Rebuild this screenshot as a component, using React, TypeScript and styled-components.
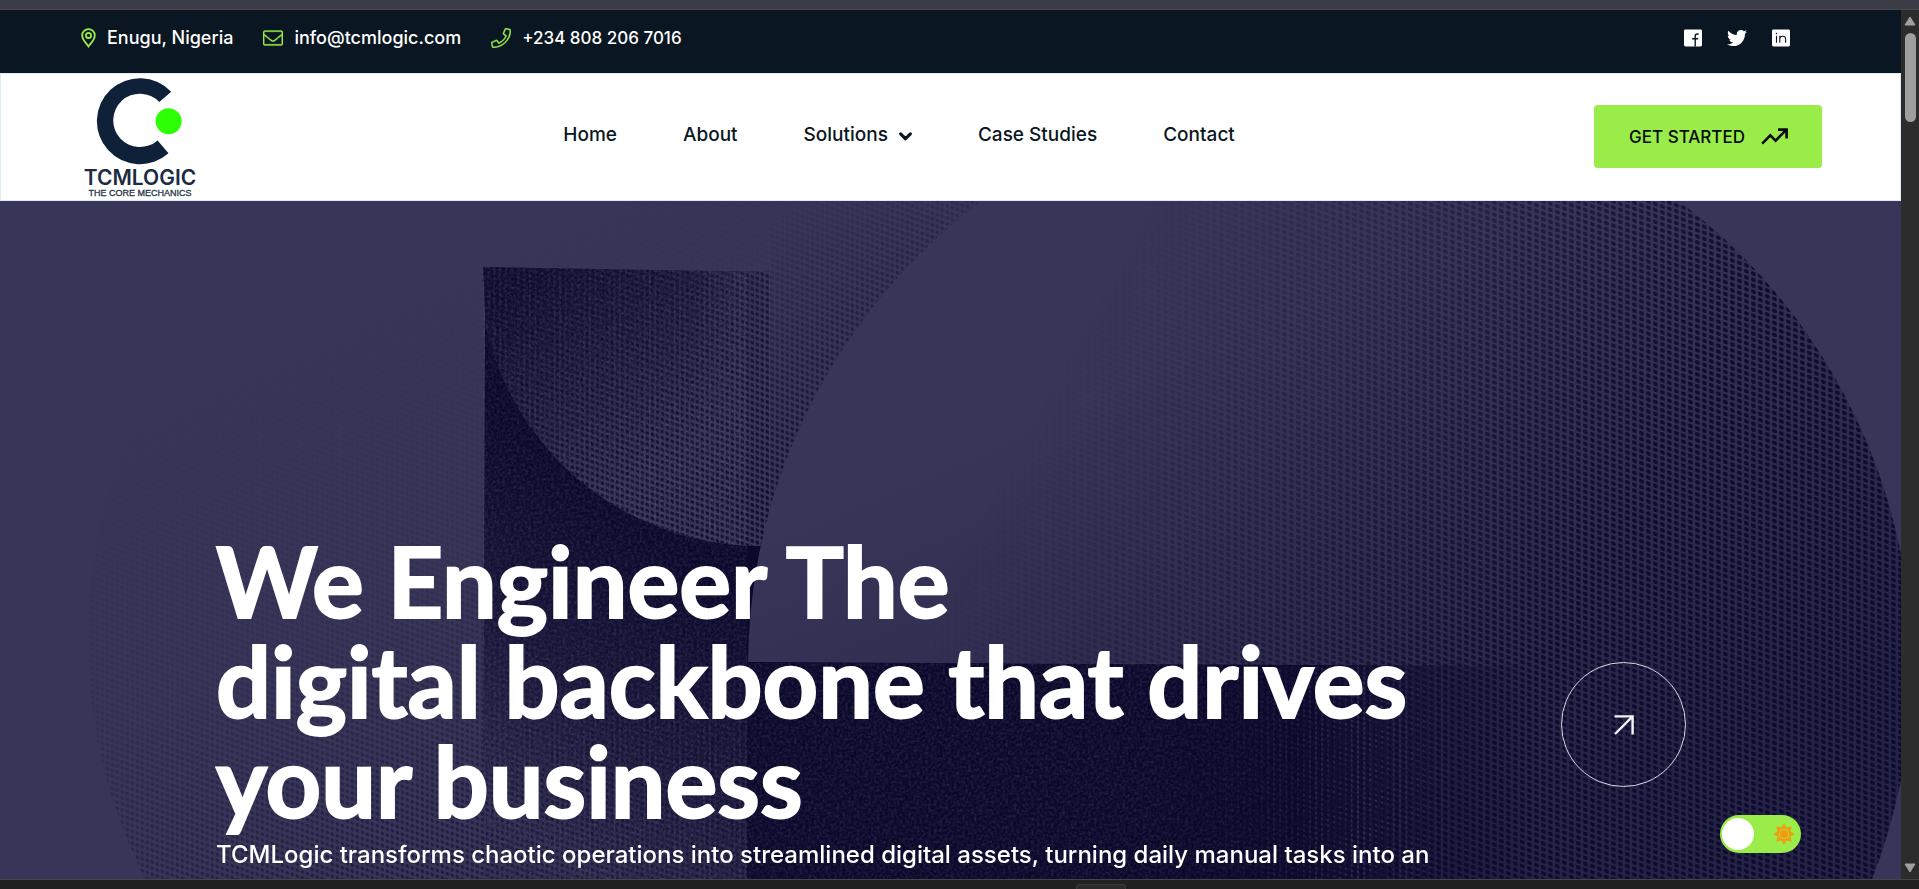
import React from "react";
import styled, { createGlobalStyle } from "styled-components";
import { FaChevronDown, FaTwitter } from "react-icons/fa6";

const GlobalStyle = createGlobalStyle`
  *, *::before, *::after { box-sizing: border-box; }
  html, body { margin: 0; padding: 0; }
  body {
    background: #202020;
    color: #0a1621;
    font-family: Inter, "Liberation Sans", sans-serif;
  }
  h1, p, ul { margin: 0; padding: 0; }
  ul { list-style: none; }
  a { color: inherit; text-decoration: none; }
  svg { display: block; }
`;

const night = "#0a1621";
const lime = "#9aec49";
const base = "#383658";
const ink = "#0b092b";

/* ---------- window frame ---------- */

const Frame = styled.div`
  display: flex;
  flex-direction: column;
  height: 100vh;
  min-height: 480px;
  overflow: hidden;
`;

const TopEdge = styled.div`
  flex: none;
  height: 10px;
  background: #3b3c46;
  border-bottom: 1px solid #46494d;
`;

const BottomEdge = styled.div`
  flex: none;
  display: flex;
  justify-content: center;
  align-items: flex-end;
  height: 10px;
  padding-left: 282px;
  background: #202020;
  border-top: 1px solid #454545;
`;

const BottomTab = styled.div`
  width: 50px;
  height: 5px;
  border: 1px solid #3c3c3c;
  border-bottom: 0;
  border-radius: 4px 4px 0 0;
  background: #2b2b2b;
`;

const Viewport = styled.div`
  flex: 1;
  display: flex;
  min-height: 0;
`;

const Page = styled.div`
  position: relative;
  flex: 1;
  display: flex;
  flex-direction: column;
  min-width: 0;
  overflow: hidden;
`;

const Scrollbar = styled.div`
  flex: none;
  display: flex;
  flex-direction: column;
  align-items: center;
  width: 18px;
  padding: 6px 0;
  background: #2c2c2c;
`;

const Thumb = styled.div`
  width: 11px;
  height: 89px;
  margin: 7px 0 auto;
  border-radius: 6px;
  background: #9f9f9f;
`;

/* ---------- contact bar ---------- */

const ContactBar = styled.div`
  flex: none;
  display: flex;
  justify-content: space-between;
  align-items: center;
  height: 63px;
  padding: 0 111px 7px 81px;
  background: ${night};
  color: #fff;
`;

const ContactList = styled.ul`
  display: flex;
  gap: 30px;
`;

const ContactLink = styled.a<{ $size?: number }>`
  display: flex;
  align-items: center;
  gap: 11px;
  font-size: ${(p) => p.$size ?? 18}px;
  font-weight: 500;
  line-height: 28px;
  white-space: nowrap;

  svg { color: ${lime}; }
`;

const SocialList = styled.ul`
  display: flex;
  align-items: center;
  gap: 25px;
`;

/* ---------- header ---------- */

const Header = styled.header`
  flex: none;
  display: flex;
  justify-content: space-between;
  align-items: center;
  height: 128px;
  padding: 0 78px 1px 79px;
  border: 1px solid #dcebf8;
  background: #fff;
`;

const LogoLink = styled.a`
  width: 124px;
`;

const Nav = styled.nav`
  display: flex;
  align-items: center;
  gap: 66px;
  padding-bottom: 3px;
`;

const navText = `
  font-family: inherit;
  font-size: 19px;
  font-weight: 500;
  line-height: 28px;
  color: ${night};
  white-space: nowrap;
`;

const NavLink = styled.a`${navText}`;

const NavButton = styled.button`
  ${navText}
  display: flex;
  align-items: center;
  gap: 11px;
  padding: 0;
  border: 0;
  background: none;

  svg { stroke: currentColor; stroke-width: 60px; overflow: visible; }
`;

const StartButton = styled.button`
  display: flex;
  align-items: center;
  gap: 16px;
  height: 63px;
  padding: 0 34px 0 35px;
  border: 0;
  border-radius: 4px;
  background: ${lime};
  color: #050a0f;
  font-family: inherit;
  font-size: 17px;
  font-weight: 500;
  white-space: nowrap;
`;

/* ---------- hero ---------- */

const Hero = styled.main`
  position: relative;
  flex: 1 0 auto;
  display: flex;
  justify-content: space-between;
  align-items: flex-start;
  padding: 330px 215px 6px 216px;
  background: ${base};
  color: #fff;
`;

const Artwork = styled.svg`
  position: absolute;
  inset: 0;
  width: 100%;
  height: 100%;
`;

const HeroText = styled.div`
  position: relative;
`;

const Title = styled.h1`
  font-family: Lato, "Liberation Sans", sans-serif;
  font-size: 97px;
  font-weight: 700;
  line-height: 100px;
  white-space: nowrap;
  -webkit-text-stroke: 2px #fff;
`;

const Lead = styled.p`
  margin-top: 6px;
  font-size: 24px;
  font-weight: 500;
  line-height: 36px;
  white-space: nowrap;
`;

const RoundLink = styled.a`
  position: relative;
  flex: none;
  display: flex;
  justify-content: center;
  align-items: center;
  width: 125px;
  height: 125px;
  margin-top: 131px;
  border: 1px solid #d8d7e0;
  border-radius: 50%;
`;

/* Floats over the page, bottom right. */
const ThemeSwitch = styled.label`
  position: absolute;
  right: 100px;
  bottom: 26px;
  display: flex;
  align-items: center;
  justify-content: space-between;
  width: 81px;
  height: 38px;
  padding: 0 6px 0 2px;
  border-radius: 19px;
  background: ${lime};

  input {
    appearance: none;
    width: 32px;
    height: 32px;
    margin: 0;
    border-radius: 50%;
    background: #fff;
  }
`;

/* ---------- drawings ---------- */

const PinIcon = () => (
  <svg width="15" height="20" viewBox="0 0 15 20" fill="none" stroke="currentColor" aria-hidden="true">
    <path d="M7.5 18.4C5.6 15.6 1.2 11.6 1.2 7.4a6.3 6.3 0 0 1 12.6 0c0 4.2-4.4 8.2-6.3 11z" strokeWidth="1.8" />
    <circle cx="7.5" cy="7.4" r="2.6" strokeWidth="1.8" />
  </svg>
);

const MailIcon = () => (
  <svg width="20" height="20" viewBox="0 0 512 512" fill="currentColor" aria-hidden="true">
    <path d="M464 64H48C21.5 64 0 85.5 0 112v288c0 26.5 21.5 48 48 48h416c26.5 0 48-21.5 48-48V112c0-26.5-21.5-48-48-48zM48 96h416c8.8 0 16 7.2 16 16v41.4c-21.9 18.5-53.2 44-150.6 121.3-16.9 13.4-50.2 45.7-73.4 45.3-23.2.4-56.6-31.9-73.4-45.3C85.2 197.4 53.9 171.9 32 153.4V112c0-8.8 7.2-16 16-16zm416 320H48c-8.8 0-16-7.2-16-16V195c22.8 18.7 58.8 47.6 130.7 104.7 20.5 16.4 56.7 52.5 93.3 52.3 36.4.3 72.3-35.5 93.3-52.3 71.9-57.1 107.9-86 130.7-104.7v205c0 8.8-7.2 16-16 16z" stroke="currentColor" strokeWidth="8" />
  </svg>
);

const PhoneIcon = () => (
  <svg width="20" height="20" viewBox="0 0 512 512" fill="currentColor" aria-hidden="true">
    <path d="M487.8 24.1L387 .8c-14.7-3.4-29.8 4.2-35.8 18.1l-46.5 108.5c-5.5 12.7-1.8 27.7 8.9 36.5l53.9 44.1c-34 69.2-90.3 125.6-159.6 159.6l-44.1-53.9c-8.8-10.7-23.8-14.4-36.5-8.9L18.9 351.3C5 357.1-2.6 372.3.8 387L24 487.7C27.3 502 39.9 512 54.5 512 306.7 512 512 307.8 512 54.5c0-14.6-10-27.2-24.2-30.4zM55.1 480l-23-99.6 107.4-46 59.5 72.8c103.6-48.6 159.7-104.9 208.1-208.1l-72.8-59.5 46-107.4 99.6 23C479.7 289.7 289.6 479.7 55.1 480z" stroke="currentColor" strokeWidth="8" />
  </svg>
);

const FacebookIcon = () => (
  <svg width="18" height="18" viewBox="0 0 18 18" aria-hidden="true">
    <rect x="0" y="0.5" width="18" height="17" rx="1.4" fill="#fff" />
    <path d="M14.6 5h-1.3c-1.4 0-2.1.8-2.1 2.1v10.4M8.2 9.7h6" fill="none" stroke="#0a1621" strokeWidth="1.4" />
  </svg>
);

const LinkedinIcon = () => (
  <svg width="18" height="18" viewBox="0 0 18 18" aria-hidden="true">
    <rect x="0" y="0.5" width="18" height="17" rx="1.4" fill="#fff" />
    <path d="M4.5 6.8v7M7.8 6.8v7M7.8 10c0-1.9 1.1-2.8 2.9-2.8s2.9 1 2.9 2.8v3.8" fill="none" stroke="#0a1621" strokeWidth="1.1" />
    <circle cx="4.5" cy="4.5" r="0.8" fill="#0a1621" />
  </svg>
);

const Logo = () => (
  <svg width="116" height="124" viewBox="80 74 116 124" role="img" aria-label="TCMLogic, The Core Mechanics">
    <path d="M171.2 90.7A43 43 0 1 0 168.5 152.3L157.6 139.4A26.7 26.7 0 1 1 159.3 101z" fill="#0f2139" />
    <circle cx="168.6" cy="120.2" r="13" fill="#2dff05" />
    <text x="140" y="183.5" textAnchor="middle" fontFamily="Inter, sans-serif" fontSize="21" fontWeight="600" fill="#1b2c43">TCMLOGIC</text>
    <text x="140" y="194.5" textAnchor="middle" fontFamily="'Liberation Sans', sans-serif" fontSize="9" fill="#26364b" stroke="#26364b" strokeWidth="0.3">THE CORE MECHANICS</text>
  </svg>
);

const TrendIcon = () => (
  <svg width="27" height="17" viewBox="0 0 27 17" fill="none" stroke="currentColor" strokeWidth="2.6" aria-hidden="true">
    <path d="M1.2 15.6 9.3 7.4l5.3 5.2L25 2.2" />
    <path d="M17 1.6h8.6v8.8" />
  </svg>
);

const DiagonalArrow = () => (
  <svg width="20" height="20" viewBox="0 0 20 20" fill="none" stroke="#f4f3f8" strokeWidth="2.4" aria-hidden="true">
    <path d="M1 19 18.6 1.4M.5 1.4h18.1v18.1" />
  </svg>
);

const SunIcon = () => (
  <svg width="22" height="22" viewBox="-11 -11 22 22" fill="#f39c12" aria-hidden="true">
    {[0, 45, 90, 135, 180, 225, 270, 315].map((turn) => (
      <path key={turn} d="M-2.8 -6.2 0 -10.8 2.8 -6.2z" transform={`rotate(${turn})`} />
    ))}
    <circle r="5.9" fill="none" stroke="#f39c12" strokeWidth="1.6" />
    <circle r="4.2" />
  </svg>
);

const Triangle = ({ down }: { down?: boolean }) => (
  <svg width="12" height="10" viewBox="0 0 12 10" fill="#9f9f9f" stroke="#9f9f9f" strokeLinejoin="round" aria-hidden="true">
    <path d={down ? "M1 1h10L6 9z" : "M1 9h10L6 1z"} />
  </svg>
);

type Stop = [offset: number, opacity: number];

const Fade = ({ id, line, color = "#fff", stops }: {
  id: string;
  line: [number, number, number, number];
  color?: string;
  stops: Stop[];
}) => (
  <linearGradient id={id} gradientUnits="userSpaceOnUse" x1={line[0]} y1={line[1]} x2={line[2]} y2={line[3]}>
    {stops.map(([offset, opacity]) => (
      <stop key={offset} offset={offset} stopColor={color} stopOpacity={opacity} />
    ))}
  </linearGradient>
);

const FadeMask = ({ id, line, stops }: {
  id: string;
  line: [number, number, number, number];
  stops: Stop[];
}) => (
  <>
    <Fade id={`${id}Fade`} line={line} stops={stops} />
    <mask id={id} maskUnits="userSpaceOnUse" x="0" y="0" width="1901" height="678">
      <rect width="1901" height="678" fill={`url(#${id}Fade)`} />
    </mask>
  </>
);

const HeroArtwork = () => (
  <Artwork viewBox="0 0 1901 678" preserveAspectRatio="xMidYMin slice" aria-hidden="true">
    <defs>
      <pattern id="dots" width="5" height="6" patternUnits="userSpaceOnUse" patternTransform="skewY(19)">
        <rect x="0.6" y="1" width="3.4" height="3.6" rx="1.2" fill={ink} />
      </pattern>
      <pattern id="wideDots" width="7" height="6" patternUnits="userSpaceOnUse" patternTransform="skewY(19)">
        <rect x="1" y="1" width="4.8" height="3.9" rx="1.4" fill={ink} />
      </pattern>
      <pattern id="threads" width="6" height="5" patternUnits="userSpaceOnUse" patternTransform="skewY(12)">
        <rect x="1" y="0.5" width="2" height="3.4" rx="1" fill="#46446a" />
      </pattern>
      <filter id="grain" x="0" y="0" width="100%" height="100%">
        <feTurbulence type="fractalNoise" baseFrequency="0.35" numOctaves="3" seed="4" />
        <feColorMatrix values="0 0 0 0 0.3  0 0 0 0 0.28  0 0 0 0 0.45  1.4 0 0 0 -0.5" />
      </filter>

      <Fade id="lift" color={base} line={[720, 380, 540, 640]} stops={[[0, 0], [0.5, 0.3], [1, 0.8]]} />
      <Fade id="curve" color={base} line={[560, 60, 680, 250]} stops={[[0, 0.1], [1, 0.95]]} />
      <Fade id="blend" color={base} line={[690, 0, 771, 0]} stops={[[0, 0], [1, 0.95]]} />
      <Fade id="shade" color={ink} line={[1260, 120, 1480, 640]} stops={[[0, 0], [1, 0.4]]} />
      <Fade id="floor" color={ink} line={[1300, 0, 1540, 0]} stops={[[0, 1], [1, 0]]} />

      <FadeMask id="leftMask" line={[180, 200, 400, 680]} stops={[[0, 0], [0.5, 0.14], [1, 0.55]]} />
      <FadeMask id="curveMask" line={[770, 340, 780, 60]} stops={[[0, 0.85], [1, 0.6]]} />
      <FadeMask id="sprayMask" line={[775, 20, 870, 200]} stops={[[0, 0], [1, 0.65]]} />
      <FadeMask id="rightMask" line={[1080, 130, 1580, 400]} stops={[[0, 0], [0.45, 0.38], [1, 0.9]]} />
      <FadeMask id="threadMask" line={[1180, 0, 1500, 0]} stops={[[0, 0], [0.6, 0.6], [1, 0]]} />
      <FadeMask id="blockThreadMask" line={[0, 380, 0, 560]} stops={[[0, 0], [1, 0.4]]} />
      <FadeMask id="grainMask" line={[1150, 0, 1400, 0]} stops={[[0, 1], [1, 0]]} />

      <clipPath id="discClip"><circle cx="1330" cy="466" r="582" /></clipPath>
      <clipPath id="blockClip"><path d="M483 66 771 71V678H483L485 110z" /></clipPath>
      <clipPath id="darkClip"><path d="M483 66 771 71V462H1400V678H483z" /></clipPath>
    </defs>

    <rect width="1901" height="678" fill={base} />

    {/* dark block behind the discs */}
    <g clipPath="url(#blockClip)">
      <rect x="480" y="60" width="300" height="618" fill={ink} />
      <g mask="url(#blockThreadMask)"><rect x="483" y="360" width="290" height="318" fill="url(#threads)" /></g>
      <circle cx="760" cy="64" r="281" fill="url(#curve)" />
      <circle cx="760" cy="64" r="281" fill="url(#blend)" />
      <circle cx="760" cy="64" r="281" fill="url(#threads)" opacity="0.3" />
      <circle cx="618" cy="439" r="530" fill="url(#lift)" />
      <g mask="url(#curveMask)"><circle cx="760" cy="64" r="281" fill="url(#dots)" /></g>
    </g>

    {/* halftone spray above the curve, and on the faint left disc */}
    <g mask="url(#sprayMask)"><rect x="771" width="260" height="345" fill="url(#dots)" /></g>
    <g mask="url(#leftMask)"><circle cx="618" cy="439" r="530" fill="url(#dots)" /></g>

    {/* large right disc */}
    <circle cx="1330" cy="466" r="582" fill={base} />
    <path d="M747 462H1000V678H747z" fill={ink} />
    <g clipPath="url(#discClip)">
      <rect width="1901" height="678" fill="url(#shade)" />
      <path d="M740 461 1901 467V678H740z" fill="url(#floor)" />
      <g mask="url(#threadMask)"><rect x="1180" y="466" width="320" height="212" fill="url(#threads)" /></g>
      <g mask="url(#rightMask)"><rect x="900" width="1001" height="678" fill="url(#wideDots)" /></g>
    </g>

    <g clipPath="url(#darkClip)" mask="url(#grainMask)">
      <rect x="483" y="66" width="264" height="612" filter="url(#grain)" opacity="0.25" />
      <rect x="747" y="462" width="660" height="216" filter="url(#grain)" opacity="0.25" />
    </g>
  </Artwork>
);

export default function App() {
  return (
    <>
      <GlobalStyle />
      <Frame>
        <TopEdge />
        <Viewport>
          <Page>
            <ContactBar>
              <ContactList>
                <li><ContactLink href="#location"><PinIcon />Enugu, Nigeria</ContactLink></li>
                <li><ContactLink href="mailto:info@tcmlogic.com"><MailIcon />info@tcmlogic.com</ContactLink></li>
                <li><ContactLink href="tel:+2348082067016" $size={17}><PhoneIcon />+234 808 206 7016</ContactLink></li>
              </ContactList>
              <SocialList>
                <li><a href="#facebook" aria-label="Facebook"><FacebookIcon /></a></li>
                <li><a href="#twitter" aria-label="Twitter"><FaTwitter size={20} /></a></li>
                <li><a href="#linkedin" aria-label="LinkedIn"><LinkedinIcon /></a></li>
              </SocialList>
            </ContactBar>

            <Header>
              <LogoLink href="#home"><Logo /></LogoLink>
              <Nav>
                <NavLink href="#home">Home</NavLink>
                <NavLink href="#about">About</NavLink>
                <NavButton type="button">Solutions<FaChevronDown size={13} /></NavButton>
                <NavLink href="#cases">Case Studies</NavLink>
                <NavLink href="#contact">Contact</NavLink>
              </Nav>
              <StartButton type="button">GET STARTED<TrendIcon /></StartButton>
            </Header>

            <Hero>
              <HeroArtwork />
              <HeroText>
                <Title>
                  We Engineer The<br />
                  digital backbone that drives<br />
                  your business
                </Title>
                <Lead>
                  TCMLogic transforms chaotic operations into streamlined digital assets, turning daily manual tasks into an
                </Lead>
              </HeroText>
              <RoundLink href="#more" aria-label="Learn more"><DiagonalArrow /></RoundLink>
            </Hero>

            <ThemeSwitch>
              <input type="checkbox" aria-label="Dark theme" />
              <SunIcon />
            </ThemeSwitch>
          </Page>
          <Scrollbar aria-hidden="true">
            <Triangle />
            <Thumb />
            <Triangle down />
          </Scrollbar>
        </Viewport>
        <BottomEdge><BottomTab /></BottomEdge>
      </Frame>
    </>
  );
}
